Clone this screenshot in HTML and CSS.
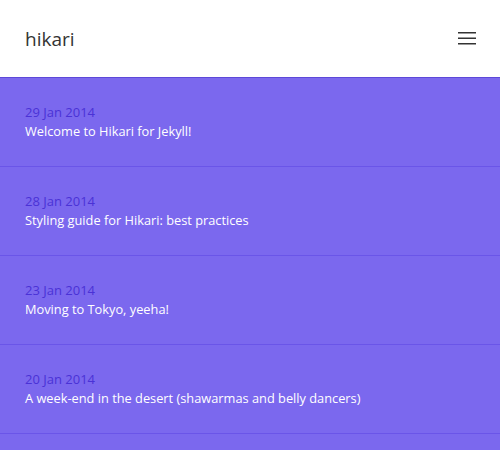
FILE: index.html
```html
<!DOCTYPE html>
<html>
<head>
<meta charset="utf-8">
<link rel="stylesheet" href="styles.css">
</head>
<body>
<header class="site-header">
  <a class="logo" href="#">hikari</a>
  <button class="menu" aria-label="Menu">
    <svg width="18" height="13" viewBox="0 0 18 13"><path d="M0 0.75H18M0 6.25H18M0 11.75H18" stroke="#333" stroke-width="1.5"/></svg>
  </button>
</header>
<main class="posts">
  <a class="post" href="#"><span class="date">29 Jan 2014</span><span class="title">Welcome to Hikari for Jekyll!</span></a>
  <a class="post" href="#"><span class="date">28 Jan 2014</span><span class="title">Styling guide for Hikari: best practices</span></a>
  <a class="post" href="#"><span class="date">23 Jan 2014</span><span class="title">Moving to Tokyo, yeeha!</span></a>
  <a class="post" href="#"><span class="date">20 Jan 2014</span><span class="title">A week-end in the desert (shawarmas and belly dancers)</span></a>
</main>
</body>
</html>
```
FILE: styles.css
```css
html, body {
  margin: 0;
  padding: 0;
}
body {
  font-family: "Open Sans", sans-serif;
  background: #7b68ee;
  overflow: hidden;
}
.site-header {
  height: 77px;
  background: #fff;
  border-bottom: 1px solid #5d48d8;
  display: flex;
  align-items: center;
  justify-content: space-between;
  padding: 0 25px;
}
.logo {
  font-size: 19px;
  color: #333;
  text-decoration: none;
}
.menu {
  border: none;
  background: none;
  padding: 0;
  display: flex;
  margin-right: -1px;
}
.posts {
  display: flex;
  flex-direction: column;
}
.post {
  display: flex;
  flex-direction: column;
  justify-content: center;
  height: 88px;
  padding: 0 25px;
  border-bottom: 1px solid #6a55e8;
  text-decoration: none;
  line-height: 19px;
}
.date {
  color: #4a32d6;
  font-size: 13px;
}
.title {
  color: #fff;
  font-size: 12.8px;
}
```
